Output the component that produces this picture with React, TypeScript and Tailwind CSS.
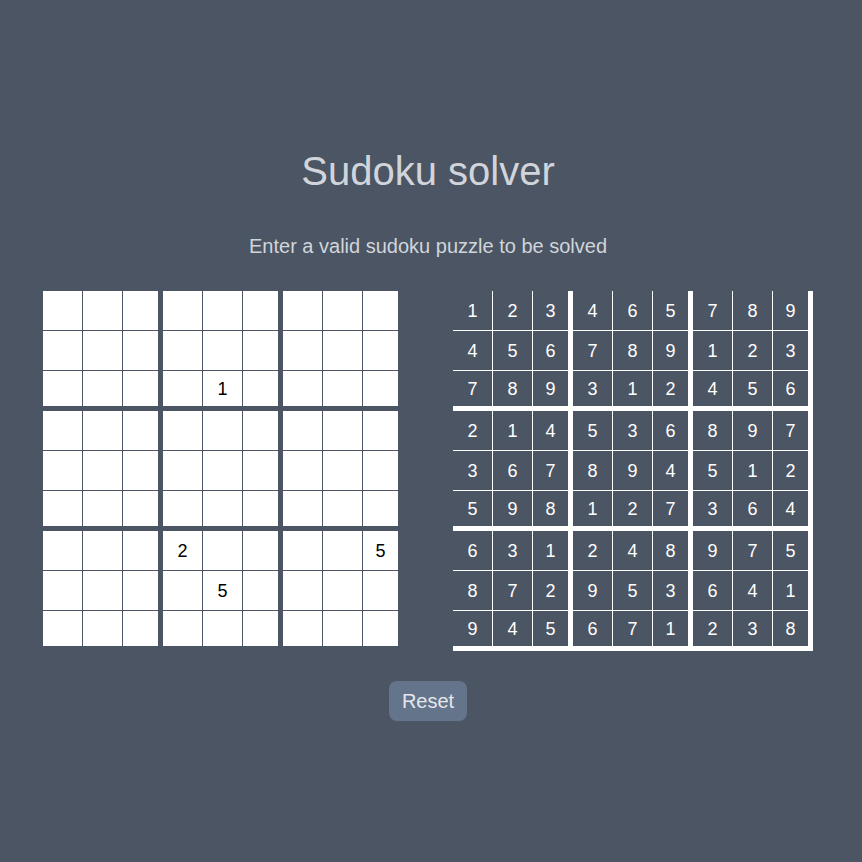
import React from "react";

const solved: number[][] = [
  [1, 2, 3, 4, 6, 5, 7, 8, 9],
  [4, 5, 6, 7, 8, 9, 1, 2, 3],
  [7, 8, 9, 3, 1, 2, 4, 5, 6],
  [2, 1, 4, 5, 3, 6, 8, 9, 7],
  [3, 6, 7, 8, 9, 4, 5, 1, 2],
  [5, 9, 8, 1, 2, 7, 3, 6, 4],
  [6, 3, 1, 2, 4, 8, 9, 7, 5],
  [8, 7, 2, 9, 5, 3, 6, 4, 1],
  [9, 4, 5, 6, 7, 1, 2, 3, 8],
];

const input: (number | null)[][] = Array.from({ length: 9 }, () => Array(9).fill(null));
input[2][4] = 1;
input[6][3] = 2;
input[6][8] = 5;
input[7][4] = 5;

function Grid({ data, dark }: { data: (number | null)[][]; dark: boolean }) {
  return (
    <div className="grid grid-cols-[repeat(9,40px)] grid-rows-[repeat(9,40px)]">
      {data.map((row, r) =>
        row.map((v, c) => {
          const br = c % 3 === 2 ? "border-r-[5px]" : "border-r";
          const bb = r % 3 === 2 ? "border-b-[5px]" : "border-b";
          return (
            <div
              key={`${r}-${c}`}
              className={`box-border flex h-10 w-10 items-center justify-center text-[18px] leading-none ${br} ${bb} ${
                dark
                  ? "border-white bg-[#4b5563] text-white"
                  : "border-[#4b5563] bg-white text-black"
              }`}
            >
              {v ?? ""}
            </div>
          );
        })
      )}
    </div>
  );
}

export default function App() {
  return (
    <div
      className="h-[862px] w-[862px] bg-[#4b5563]"
      style={{ fontFamily: '"Liberation Sans", Arial, sans-serif' }}
    >
      <div className="flex w-[856px] flex-col items-center">
        <h1 className="mt-[147px] text-[40px] leading-[48px] font-normal text-[#d1d5db]">
          Sudoku solver
        </h1>
        <p className="mt-[37px] text-xl leading-7 text-[#d1d5db]">
          Enter a valid sudoku puzzle to be solved
        </p>
        <div className="mt-[31px] flex gap-[50px]">
          <Grid data={input} dark={false} />
          <Grid data={solved} dark={true} />
        </div>
        <button className="mt-[30px] h-10 rounded-lg bg-[#64748b] px-[13px] text-xl leading-7 text-[#e5e7eb]">
          Reset
        </button>
      </div>
    </div>
  );
}
